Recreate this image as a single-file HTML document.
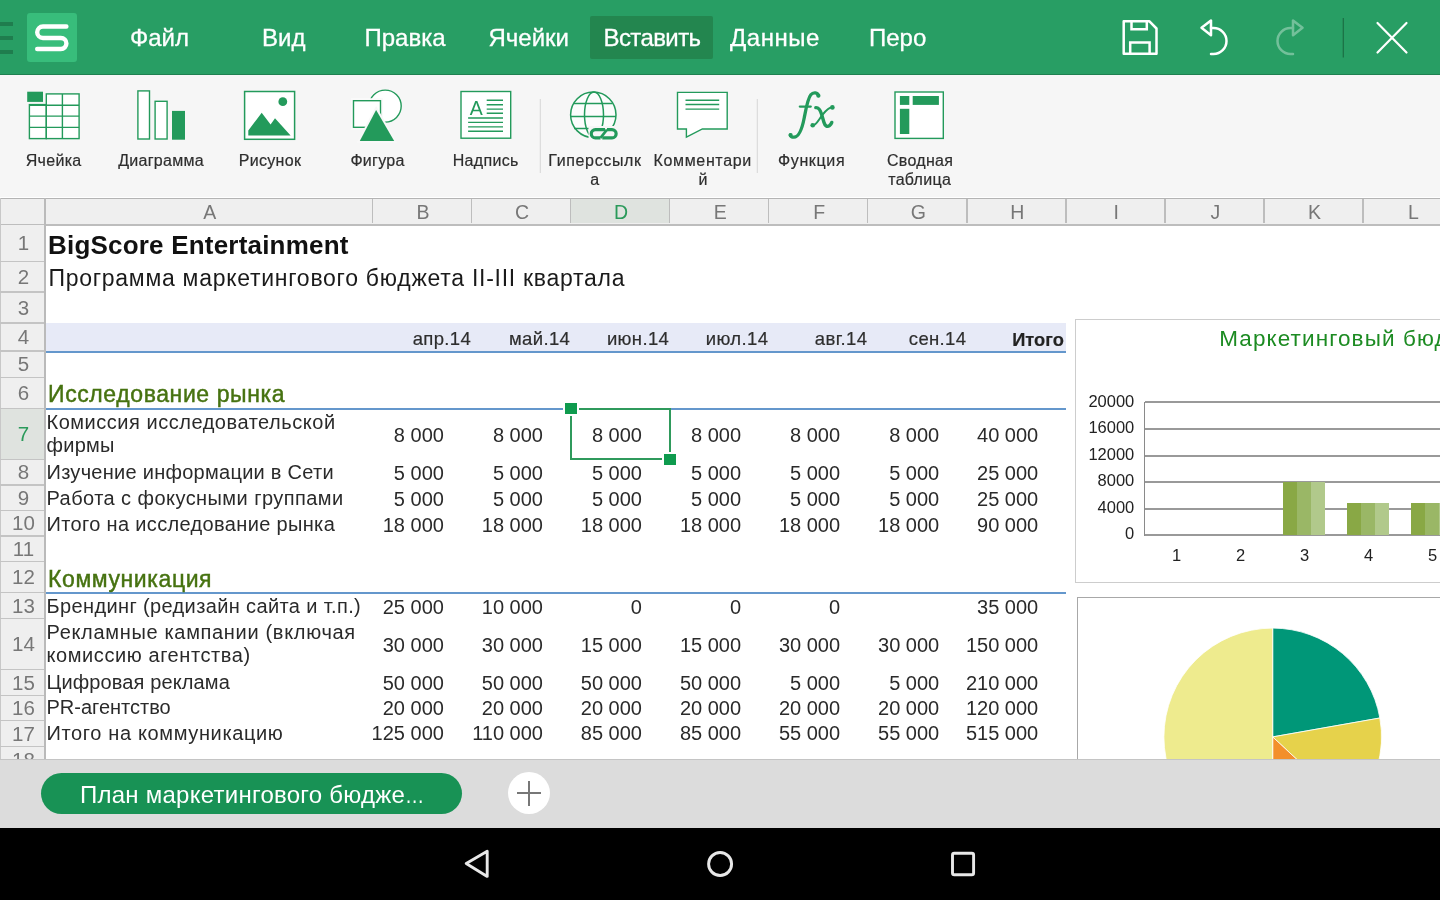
<!DOCTYPE html><html><head><meta charset="utf-8"><style>
*{margin:0;padding:0;box-sizing:border-box}
html,body{width:1440px;height:900px;overflow:hidden;background:#fff;font-family:"Liberation Sans", sans-serif}
.gs{position:absolute;left:0;top:0;width:1440px;height:900px;will-change:transform}
.a{position:absolute}
.t{position:absolute;white-space:nowrap;line-height:1}
.menu{color:#fff;font-size:24px;-webkit-text-stroke:0.3px #fff}
.tb{color:#2e2e2e;font-size:16px;letter-spacing:0.3px;text-align:center;-webkit-text-stroke:0.2px #2e2e2e}
.ch{color:#777;font-size:19.5px;text-align:center}
.rh{color:#777;font-size:20.5px;text-align:center}
.c{color:#2a2a2a;font-size:20px;letter-spacing:0.4px}
.n{color:#2a2a2a;font-size:20px;text-align:right}
.m{color:#2e2e2e;font-size:18.5px;text-align:right;letter-spacing:0.35px;-webkit-text-stroke:0.2px #2e2e2e}
</style></head><body><div class="gs">
<div class="a" style="left:0;top:0;width:1440px;height:75px;background:#289e64"></div>
<div class="a" style="left:0;top:74px;width:1440px;height:1px;background:#1f8050"></div>
<div class="a" style="left:0;top:21.5px;width:13px;height:4px;background:#1f7d4e"></div>
<div class="a" style="left:0;top:35.5px;width:13px;height:4px;background:#1f7d4e"></div>
<div class="a" style="left:0;top:49.5px;width:13px;height:4px;background:#1f7d4e"></div>
<div class="a" style="left:27px;top:13px;width:50px;height:49px;border-radius:3px;background:#38bd7b"></div>
<svg class="a" style="left:27px;top:13px" width="50" height="49" viewBox="0 0 50 49"><path d="M39.4 13.5 H15.95 A5.75 5.75 0 0 0 15.95 25 H33.9 A5.5 5.5 0 0 1 33.9 36 H10.2" fill="none" stroke="#fff" stroke-width="4.4" stroke-linecap="round"/></svg>
<div class="a" style="left:590px;top:16px;width:122.5px;height:42.8px;border-radius:2px;background:#23864f"></div>
<div class="t menu" style="left:130px;top:26.1px">Файл</div>
<div class="t menu" style="left:262px;top:26.1px">Вид</div>
<div class="t menu" style="left:364.5px;top:26.1px">Правка</div>
<div class="t menu" style="left:488.5px;top:26.1px">Ячейки</div>
<div class="t menu" style="left:603.5px;top:26.1px"><span style="letter-spacing:-0.6px">Вставить</span></div>
<div class="t menu" style="left:730px;top:26.1px"><span style="letter-spacing:0.55px">Данные</span></div>
<div class="t menu" style="left:869px;top:26.1px">Перо</div>
<svg class="a" style="left:1100px;top:0" width="340" height="74" viewBox="1100 0 340 74">
<path d="M1123.7 21.2 H1149.2 L1156.5 28.5 V53.8 H1123.7 Z" fill="none" stroke="#fff" stroke-width="2.5" stroke-linejoin="round"/>
<path d="M1131.5 21.2 V29.2 H1146.8 V21.2" fill="none" stroke="#fff" stroke-width="2.5"/>
<path d="M1130.2 53.8 V42.5 H1149.6 V53.8" fill="none" stroke="#fff" stroke-width="2.5"/>
<path d="M1201.5 27.8 L1211 20.5 V35.2 Z" fill="none" stroke="#fff" stroke-width="2.5" stroke-linejoin="round"/>
<path d="M1211 28 H1213.5 A13 13 0 0 1 1213.5 54 H1211" fill="none" stroke="#fff" stroke-width="2.5" stroke-linecap="round"/>
<g opacity="0.35">
<path d="M1302.5 27.8 L1293 20.5 V35.2 Z" fill="none" stroke="#fff" stroke-width="2.5" stroke-linejoin="round"/>
<path d="M1293 28 H1290.5 A13 13 0 0 0 1290.5 54 H1293" fill="none" stroke="#fff" stroke-width="2.5" stroke-linecap="round"/>
</g>
<rect x="1342.7" y="18" width="1.2" height="39.5" fill="#1b6e44"/>
<path d="M1377.5 23 L1406.5 52.5 M1406.5 23 L1377.5 52.5" stroke="#fff" stroke-width="2.2" stroke-linecap="round"/>
</svg>
<div class="a" style="left:0;top:75px;width:1440px;height:123px;background:#f6f6f6"></div>
<svg class="a" style="left:0;top:74px" width="1000" height="124" viewBox="0 74 1000 124">
<g fill="none" stroke="#239a5b" stroke-width="1.4">
<rect x="29.4" y="104.6" width="16.9" height="34" fill="#fff"/>
<rect x="46.3" y="93.9" width="32.8" height="44.7" fill="#fff"/>
<path d="M62.4 93.9 V138.6 M29.4 116.1 H79.1 M29.4 127.4 H79.1 M29.4 105.3 H79.1"/>
</g>
<rect x="27.2" y="91.7" width="15.8" height="10.2" fill="#239a5b"/>
<g fill="#fff" stroke="#239a5b" stroke-width="1.4">
<rect x="137.9" y="90.9" width="11.6" height="48.1"/>
<rect x="155.1" y="101.3" width="12" height="37.7"/>
</g>
<rect x="172" y="110.9" width="13" height="28.8" fill="#239a5b"/>
<rect x="244.6" y="91.5" width="50" height="47.8" fill="#fff" stroke="#239a5b" stroke-width="1.5"/>
<circle cx="282.8" cy="101.7" r="4.4" fill="#239a5b"/>
<path d="M248.3 135.6 V130.5 L261.7 112.8 L270.6 124.4 L275 118.3 L290.6 135.6 Z" fill="#239a5b"/>
<circle cx="385.2" cy="106.1" r="16" fill="#fff" stroke="#239a5b" stroke-width="1.4"/>
<rect x="353.5" y="100.7" width="27" height="26.6" fill="#fff" stroke="#fafafa" stroke-width="5"/>
<rect x="353.5" y="100.7" width="27" height="26.6" fill="#fff" stroke="#239a5b" stroke-width="1.4"/>
<path d="M376.1 106 L397.5 143 H356.5 Z" fill="#f8f8f8"/>
<path d="M376.1 110 L394.2 140.9 H359.8 Z" fill="#239a5b"/>
<rect x="461" y="91.5" width="49.7" height="46.7" fill="#fff" stroke="#239a5b" stroke-width="1.4"/>
<path d="M486.7 100.3 H503 M486.7 104.7 H503 M486.7 109.1 H503 M486.7 113.3 H503 M468.1 118 H503 M468.1 122.4 H503 M468.1 126.9 H503 M468.1 131.3 H503" stroke="#239a5b" stroke-width="1.4"/>
<text x="476.2" y="114.7" font-family="Liberation Sans" font-size="19.5" fill="#239a5b" text-anchor="middle">A</text>
<rect x="539.8" y="99" width="1" height="74" fill="#d6d6d6"/>
<circle cx="593.3" cy="114.8" r="22.7" fill="#fcfcfc" stroke="#239a5b" stroke-width="1.5"/>
<ellipse cx="594" cy="114.8" rx="9.5" ry="22.7" fill="none" stroke="#239a5b" stroke-width="1.5"/>
<path d="M574 103.6 H612.6 M570.6 116.4 H616 M574 128.5 H612.6" stroke="#239a5b" stroke-width="1.5"/>
<path d="M588.5 126 H619 V141 H588.5 Z" fill="#f6f6f6"/>
<g fill="none" stroke="#239a5b" stroke-width="3.2" stroke-linecap="butt">
<path d="M605 129.6 H595.4 A4.15 4.15 0 0 0 595.4 137.9 H600.5"/>
<path d="M602.3 137.9 H612 A4.15 4.15 0 0 0 612 129.6 H607"/>
<path d="M600.5 137.9 L607 129.6" stroke-width="2.6"/>
</g>
<path d="M677.5 92.4 H727.2 V129 H702.4 L686.4 137.2 V129 H677.5 Z" fill="#fff" stroke="#239a5b" stroke-width="1.4" stroke-linejoin="miter"/>
<path d="M685.5 100.2 H719.2 M685.5 104.5 H719.2 M685.5 109.1 H719.2" stroke="#239a5b" stroke-width="1.4"/>
<rect x="756.8" y="99" width="1" height="74" fill="#d6d6d6"/>
<g fill="none" stroke="#239a5b" stroke-linecap="round">
<path d="M818.3 95.6 C817.8 92.6 813.5 91.6 810.8 94.8 C807.8 98.3 806.3 107 804.3 117.5 C802.3 128 799.3 137 794 137.2 C791.8 137.3 790.3 136.2 790.3 135" stroke-width="3.3"/>
<path d="M799.8 106.6 H810.8" stroke-width="2.2"/>
<path d="M815.8 107.6 C818.6 107.4 820.2 109.5 821.5 114 L824 122.5 C825 126 827.2 127.3 829.5 125.6 C830.6 124.8 831.4 123.6 831.8 122.4" stroke-width="3.4"/>
<path d="M832.4 107.2 C829.2 107 826.6 109.6 822.6 114.6 C818.4 120 816.4 125.2 812.8 125.4" stroke-width="2"/>
</g>
<circle cx="818.4" cy="95.7" r="2.1" fill="#239a5b"/><circle cx="790.6" cy="135.1" r="2.1" fill="#239a5b"/>
<circle cx="832.4" cy="107.4" r="2.3" fill="#239a5b"/><circle cx="812.7" cy="125.3" r="2.3" fill="#239a5b"/>
<rect x="895" y="92" width="48.3" height="46.4" fill="#fff" stroke="#239a5b" stroke-width="1.4"/>
<rect x="899.9" y="96" width="9.4" height="8.9" fill="#239a5b"/>
<rect x="912.7" y="96" width="26.2" height="8.9" fill="#239a5b"/>
<rect x="899.9" y="108.8" width="9.4" height="25.2" fill="#239a5b"/>
</svg>
<div class="t tb" style="left:-16.4px;width:140px;top:153.2px">Ячейка</div>
<div class="t tb" style="left:91.1px;width:140px;top:153.2px">Диаграмма</div>
<div class="t tb" style="left:200px;width:140px;top:153.2px">Рисунок</div>
<div class="t tb" style="left:307.6px;width:140px;top:153.2px">Фигура</div>
<div class="t tb" style="left:415.7px;width:140px;top:153.2px">Надпись</div>
<div class="t tb" style="left:525px;width:140px;top:153.2px"><span style="letter-spacing:0.65px">Гиперссылк</span></div>
<div class="t tb" style="left:632.7px;width:140px;top:153.2px"><span style="letter-spacing:0.65px">Комментари</span></div>
<div class="t tb" style="left:741.6px;width:140px;top:153.2px"><span style="letter-spacing:0.65px">Функция</span></div>
<div class="t tb" style="left:850.1px;width:140px;top:153.2px">Сводная</div>
<div class="t tb" style="left:524.8px;width:140px;top:172.2px">а</div>
<div class="t tb" style="left:633px;width:140px;top:172.2px">й</div>
<div class="t tb" style="left:849.7px;width:140px;top:172.2px">таблица</div>
<div class="a" style="left:0;top:197px;width:1440px;height:1px;background:#fff"></div>
<div class="a" style="left:0;top:198px;width:1440px;height:28px;background:#efefef;border-top:1px solid #b4b4b4;border-bottom:2px solid #bdbdbd"></div>
<div class="a" style="left:570.6px;top:199px;width:99.0px;height:24px;background:#dfe3df"></div>
<div class="a" style="left:371.7px;top:199px;width:1.6px;height:24px;background:#bdbdbd"></div>
<div class="t ch" style="left:46px;width:327.5px;top:203.2px;color:#777">A</div>
<div class="a" style="left:470.7px;top:199px;width:1.6px;height:24px;background:#bdbdbd"></div>
<div class="t ch" style="left:373.5px;width:99.0px;top:203.2px;color:#777">B</div>
<div class="a" style="left:569.8000000000001px;top:199px;width:1.6px;height:24px;background:#bdbdbd"></div>
<div class="t ch" style="left:472.5px;width:99.10000000000002px;top:203.2px;color:#777">C</div>
<div class="a" style="left:668.8000000000001px;top:199px;width:1.6px;height:24px;background:#bdbdbd"></div>
<div class="t ch" style="left:571.6px;width:99.0px;top:203.2px;color:#2a9a5a">D</div>
<div class="a" style="left:767.9000000000001px;top:199px;width:1.6px;height:24px;background:#bdbdbd"></div>
<div class="t ch" style="left:670.6px;width:99.10000000000002px;top:203.2px;color:#777">E</div>
<div class="a" style="left:866.9000000000001px;top:199px;width:1.6px;height:24px;background:#bdbdbd"></div>
<div class="t ch" style="left:769.7px;width:99.0px;top:203.2px;color:#777">F</div>
<div class="a" style="left:966.0px;top:199px;width:1.6px;height:24px;background:#bdbdbd"></div>
<div class="t ch" style="left:868.7px;width:99.09999999999991px;top:203.2px;color:#777">G</div>
<div class="a" style="left:1065.0px;top:199px;width:1.6px;height:24px;background:#bdbdbd"></div>
<div class="t ch" style="left:967.8px;width:99.0px;top:203.2px;color:#777">H</div>
<div class="a" style="left:1164.0px;top:199px;width:1.6px;height:24px;background:#bdbdbd"></div>
<div class="t ch" style="left:1066.8px;width:99.0px;top:203.2px;color:#777">I</div>
<div class="a" style="left:1263.1000000000001px;top:199px;width:1.6px;height:24px;background:#bdbdbd"></div>
<div class="t ch" style="left:1165.8px;width:99.10000000000014px;top:203.2px;color:#777">J</div>
<div class="a" style="left:1362.1000000000001px;top:199px;width:1.6px;height:24px;background:#bdbdbd"></div>
<div class="t ch" style="left:1264.9px;width:99.0px;top:203.2px;color:#777">K</div>
<div class="a" style="left:1461.2px;top:199px;width:1.6px;height:24px;background:#bdbdbd"></div>
<div class="t ch" style="left:1363.9px;width:99.09999999999991px;top:203.2px;color:#777">L</div>
<div class="a" style="left:0;top:225px;width:45px;height:534px;background:#efefef"></div>
<div class="a" style="left:0;top:408.3px;width:44px;height:50.89999999999998px;background:#dfe3df"></div>
<div class="a" style="left:0;top:198px;width:1px;height:561px;background:#c8c8c8"></div>
<div class="a" style="left:44px;top:198px;width:2px;height:561px;background:#bababa"></div>
<div class="a" style="left:0;top:260.6px;width:44px;height:1.4px;background:#c4c4c4"></div>
<div class="t rh" style="left:0.5px;width:46px;top:233.2px;color:#777">1</div>
<div class="a" style="left:0;top:291.3px;width:44px;height:1.4px;background:#c4c4c4"></div>
<div class="t rh" style="left:0.5px;width:46px;top:266.8px;color:#777">2</div>
<div class="a" style="left:0;top:322.3px;width:44px;height:1.4px;background:#c4c4c4"></div>
<div class="t rh" style="left:0.5px;width:46px;top:297.6px;color:#777">3</div>
<div class="a" style="left:0;top:350.3px;width:44px;height:1.4px;background:#c4c4c4"></div>
<div class="t rh" style="left:0.5px;width:46px;top:327.1px;color:#777">4</div>
<div class="a" style="left:0;top:376.8px;width:44px;height:1.4px;background:#c4c4c4"></div>
<div class="t rh" style="left:0.5px;width:46px;top:354.4px;color:#777">5</div>
<div class="a" style="left:0;top:407.6px;width:44px;height:1.4px;background:#c4c4c4"></div>
<div class="t rh" style="left:0.5px;width:46px;top:383.0px;color:#777">6</div>
<div class="a" style="left:0;top:458.5px;width:44px;height:1.4px;background:#c4c4c4"></div>
<div class="t rh" style="left:0.5px;width:46px;top:423.9px;color:#2a9a5a">7</div>
<div class="a" style="left:0;top:484.3px;width:44px;height:1.4px;background:#c4c4c4"></div>
<div class="t rh" style="left:0.5px;width:46px;top:462.2px;color:#777">8</div>
<div class="a" style="left:0;top:509.8px;width:44px;height:1.4px;background:#c4c4c4"></div>
<div class="t rh" style="left:0.5px;width:46px;top:487.9px;color:#777">9</div>
<div class="a" style="left:0;top:535.3px;width:44px;height:1.4px;background:#c4c4c4"></div>
<div class="t rh" style="left:0.5px;width:46px;top:513.4px;color:#777">10</div>
<div class="a" style="left:0;top:560.8px;width:44px;height:1.4px;background:#c4c4c4"></div>
<div class="t rh" style="left:0.5px;width:46px;top:538.9px;color:#777">11</div>
<div class="a" style="left:0;top:591.8px;width:44px;height:1.4px;background:#c4c4c4"></div>
<div class="t rh" style="left:0.5px;width:46px;top:567.1px;color:#777">12</div>
<div class="a" style="left:0;top:617.5px;width:44px;height:1.4px;background:#c4c4c4"></div>
<div class="t rh" style="left:0.5px;width:46px;top:595.5px;color:#777">13</div>
<div class="a" style="left:0;top:669.0px;width:44px;height:1.4px;background:#c4c4c4"></div>
<div class="t rh" style="left:0.5px;width:46px;top:634.1px;color:#777">14</div>
<div class="a" style="left:0;top:694.5999999999999px;width:44px;height:1.4px;background:#c4c4c4"></div>
<div class="t rh" style="left:0.5px;width:46px;top:672.6px;color:#777">15</div>
<div class="a" style="left:0;top:720.0999999999999px;width:44px;height:1.4px;background:#c4c4c4"></div>
<div class="t rh" style="left:0.5px;width:46px;top:698.1px;color:#777">16</div>
<div class="a" style="left:0;top:746.0px;width:44px;height:1.4px;background:#c4c4c4"></div>
<div class="t rh" style="left:0.5px;width:46px;top:723.9px;color:#777">17</div>
<div class="a" style="left:0;top:771.9px;width:44px;height:1.4px;background:#c4c4c4"></div>
<div class="t rh" style="left:0.5px;width:46px;top:749.8px;color:#777">18</div>
<div class="a" style="left:46px;top:323.4px;width:1020px;height:27.5px;background:#e7eaf7"></div>
<div class="a" style="left:46px;top:350.6px;width:1020px;height:2px;background:#6497cc"></div>
<div class="a" style="left:46px;top:407.6px;width:1020px;height:2px;background:#6497cc"></div>
<div class="a" style="left:46px;top:592.2px;width:1020px;height:2px;background:#6497cc"></div>
<div class="t c" style="left:48px;top:232.3px;font-size:26px;font-weight:bold;color:#111;letter-spacing:0.2px">BigScore Entertainment</div>
<div class="t c" style="left:48.4px;top:266.8px;font-size:23px;color:#1a1a1a;letter-spacing:0.73px">Программа маркетингового бюджета II-III квартала</div>
<div class="t c" style="left:48px;top:382.8px;font-size:23px;color:#467210;letter-spacing:0.6px;-webkit-text-stroke:0.45px #467210">Исследование рынка</div>
<div class="t c" style="left:48px;top:567.5px;font-size:23px;color:#467210;letter-spacing:0.6px;-webkit-text-stroke:0.45px #467210">Коммуникация</div>
<div class="t c" style="left:46.5px;top:412.1px;letter-spacing:0.528px">Комиссия исследовательской</div>
<div class="t c" style="left:46.5px;top:435.1px;letter-spacing:0.25px">фирмы</div>
<div class="t c" style="left:46.5px;top:462.3px;letter-spacing:0.272px">Изучение информации в Сети</div>
<div class="t c" style="left:46.5px;top:488.1px;letter-spacing:0.438px">Работа с фокусными группами</div>
<div class="t c" style="left:46.5px;top:513.6px;letter-spacing:0.346px">Итого на исследование рынка</div>
<div class="t c" style="left:46.5px;top:595.8px;letter-spacing:0.371px">Брендинг (редизайн сайта и т.п.)</div>
<div class="t c" style="left:46.5px;top:621.8px;letter-spacing:0.677px">Рекламные кампании (включая</div>
<div class="t c" style="left:46.5px;top:645.3px;letter-spacing:0.578px">комиссию агентства)</div>
<div class="t c" style="left:46.5px;top:672.1px;letter-spacing:0.12px">Цифровая реклама</div>
<div class="t c" style="left:46.5px;top:697.1px;letter-spacing:0px">PR-агентство</div>
<div class="t c" style="left:46.5px;top:722.7px;letter-spacing:0.635px">Итого на коммуникацию</div>
<div class="t m" style="left:351.5px;width:119.6px;top:330.3px">апр.14</div>
<div class="t m" style="left:450.6px;width:119.6px;top:330.3px">май.14</div>
<div class="t m" style="left:549.6px;width:119.6px;top:330.3px">июн.14</div>
<div class="t m" style="left:648.7px;width:119.6px;top:330.3px">июл.14</div>
<div class="t m" style="left:747.7px;width:119.6px;top:330.3px">авг.14</div>
<div class="t m" style="left:846.8px;width:119.6px;top:330.3px">сен.14</div>
<div class="t m" style="left:945.8px;width:118px;top:330.9px;font-weight:bold;color:#222;font-size:18.3px;letter-spacing:0">Итого</div>
<div class="t n" style="left:321.5px;width:122.4px;top:425.1px">8 000</div>
<div class="t n" style="left:420.6px;width:122.4px;top:425.1px">8 000</div>
<div class="t n" style="left:519.6px;width:122.4px;top:425.1px">8 000</div>
<div class="t n" style="left:618.7px;width:122.4px;top:425.1px">8 000</div>
<div class="t n" style="left:717.7px;width:122.4px;top:425.1px">8 000</div>
<div class="t n" style="left:816.8px;width:122.4px;top:425.1px">8 000</div>
<div class="t n" style="left:915.8px;width:122.4px;top:425.1px">40 000</div>
<div class="t n" style="left:321.5px;width:122.4px;top:463.3px">5 000</div>
<div class="t n" style="left:420.6px;width:122.4px;top:463.3px">5 000</div>
<div class="t n" style="left:519.6px;width:122.4px;top:463.3px">5 000</div>
<div class="t n" style="left:618.7px;width:122.4px;top:463.3px">5 000</div>
<div class="t n" style="left:717.7px;width:122.4px;top:463.3px">5 000</div>
<div class="t n" style="left:816.8px;width:122.4px;top:463.3px">5 000</div>
<div class="t n" style="left:915.8px;width:122.4px;top:463.3px">25 000</div>
<div class="t n" style="left:321.5px;width:122.4px;top:488.8px">5 000</div>
<div class="t n" style="left:420.6px;width:122.4px;top:488.8px">5 000</div>
<div class="t n" style="left:519.6px;width:122.4px;top:488.8px">5 000</div>
<div class="t n" style="left:618.7px;width:122.4px;top:488.8px">5 000</div>
<div class="t n" style="left:717.7px;width:122.4px;top:488.8px">5 000</div>
<div class="t n" style="left:816.8px;width:122.4px;top:488.8px">5 000</div>
<div class="t n" style="left:915.8px;width:122.4px;top:488.8px">25 000</div>
<div class="t n" style="left:321.5px;width:122.4px;top:514.6px">18 000</div>
<div class="t n" style="left:420.6px;width:122.4px;top:514.6px">18 000</div>
<div class="t n" style="left:519.6px;width:122.4px;top:514.6px">18 000</div>
<div class="t n" style="left:618.7px;width:122.4px;top:514.6px">18 000</div>
<div class="t n" style="left:717.7px;width:122.4px;top:514.6px">18 000</div>
<div class="t n" style="left:816.8px;width:122.4px;top:514.6px">18 000</div>
<div class="t n" style="left:915.8px;width:122.4px;top:514.6px">90 000</div>
<div class="t n" style="left:321.5px;width:122.4px;top:596.7px">25 000</div>
<div class="t n" style="left:420.6px;width:122.4px;top:596.7px">10 000</div>
<div class="t n" style="left:519.6px;width:122.4px;top:596.7px">0</div>
<div class="t n" style="left:618.7px;width:122.4px;top:596.7px">0</div>
<div class="t n" style="left:717.7px;width:122.4px;top:596.7px">0</div>
<div class="t n" style="left:915.8px;width:122.4px;top:596.7px">35 000</div>
<div class="t n" style="left:321.5px;width:122.4px;top:635.1px">30 000</div>
<div class="t n" style="left:420.6px;width:122.4px;top:635.1px">30 000</div>
<div class="t n" style="left:519.6px;width:122.4px;top:635.1px">15 000</div>
<div class="t n" style="left:618.7px;width:122.4px;top:635.1px">15 000</div>
<div class="t n" style="left:717.7px;width:122.4px;top:635.1px">30 000</div>
<div class="t n" style="left:816.8px;width:122.4px;top:635.1px">30 000</div>
<div class="t n" style="left:915.8px;width:122.4px;top:635.1px">150 000</div>
<div class="t n" style="left:321.5px;width:122.4px;top:673.3px">50 000</div>
<div class="t n" style="left:420.6px;width:122.4px;top:673.3px">50 000</div>
<div class="t n" style="left:519.6px;width:122.4px;top:673.3px">50 000</div>
<div class="t n" style="left:618.7px;width:122.4px;top:673.3px">50 000</div>
<div class="t n" style="left:717.7px;width:122.4px;top:673.3px">5 000</div>
<div class="t n" style="left:816.8px;width:122.4px;top:673.3px">5 000</div>
<div class="t n" style="left:915.8px;width:122.4px;top:673.3px">210 000</div>
<div class="t n" style="left:321.5px;width:122.4px;top:698.3px">20 000</div>
<div class="t n" style="left:420.6px;width:122.4px;top:698.3px">20 000</div>
<div class="t n" style="left:519.6px;width:122.4px;top:698.3px">20 000</div>
<div class="t n" style="left:618.7px;width:122.4px;top:698.3px">20 000</div>
<div class="t n" style="left:717.7px;width:122.4px;top:698.3px">20 000</div>
<div class="t n" style="left:816.8px;width:122.4px;top:698.3px">20 000</div>
<div class="t n" style="left:915.8px;width:122.4px;top:698.3px">120 000</div>
<div class="t n" style="left:321.5px;width:122.4px;top:723.3px">125 000</div>
<div class="t n" style="left:420.6px;width:122.4px;top:723.3px">110 000</div>
<div class="t n" style="left:519.6px;width:122.4px;top:723.3px">85 000</div>
<div class="t n" style="left:618.7px;width:122.4px;top:723.3px">85 000</div>
<div class="t n" style="left:717.7px;width:122.4px;top:723.3px">55 000</div>
<div class="t n" style="left:816.8px;width:122.4px;top:723.3px">55 000</div>
<div class="t n" style="left:915.8px;width:122.4px;top:723.3px">515 000</div>
<div class="a" style="left:569.6px;top:407.6px;width:101px;height:52.8px;border:2px solid #2f9a5c"></div>
<div class="a" style="left:562.8px;top:401.3px;width:16px;height:15px;background:#fff"></div>
<div class="a" style="left:564.9px;top:403.2px;width:11.8px;height:11.2px;background:#0f9b4e"></div>
<div class="a" style="left:661.9px;top:452.0px;width:16px;height:15px;background:#fff"></div>
<div class="a" style="left:664.0px;top:453.9px;width:11.8px;height:11.2px;background:#0f9b4e"></div>
<div class="a" style="left:1075.3px;top:318.7px;width:400px;height:264.3px;background:#fff;border:1px solid #cdcdcd"></div>
<div class="t" style="left:1219.2px;top:328.4px;font-size:22.5px;color:#1c8b22;letter-spacing:1.1px">Маркетинговый бюджет</div>
<div class="a" style="left:1144.5px;top:401px;width:300px;height:2px;background:#999"></div>
<div class="t" style="left:1034.3px;width:100px;text-align:right;top:392.5px;font-size:16.5px;color:#222">20000</div>
<div class="a" style="left:1144.5px;top:428px;width:300px;height:2px;background:#999"></div>
<div class="t" style="left:1034.3px;width:100px;text-align:right;top:419.1px;font-size:16.5px;color:#222">16000</div>
<div class="a" style="left:1144.5px;top:455px;width:300px;height:2px;background:#999"></div>
<div class="t" style="left:1034.3px;width:100px;text-align:right;top:445.8px;font-size:16.5px;color:#222">12000</div>
<div class="a" style="left:1144.5px;top:481px;width:300px;height:2px;background:#999"></div>
<div class="t" style="left:1034.3px;width:100px;text-align:right;top:472.4px;font-size:16.5px;color:#222">8000</div>
<div class="a" style="left:1144.5px;top:508px;width:300px;height:2px;background:#999"></div>
<div class="t" style="left:1034.3px;width:100px;text-align:right;top:499.1px;font-size:16.5px;color:#222">4000</div>
<div class="a" style="left:1144.5px;top:534px;width:300px;height:2px;background:#999"></div>
<div class="t" style="left:1034.3px;width:100px;text-align:right;top:525.4px;font-size:16.5px;color:#222">0</div>
<div class="a" style="left:1143.8px;top:402px;width:1.5px;height:133.5px;background:#8a8a8a"></div>
<div class="t" style="left:1156.5px;width:40px;text-align:center;top:546.6px;font-size:16.5px;color:#222">1</div>
<div class="t" style="left:1220.5px;width:40px;text-align:center;top:546.6px;font-size:16.5px;color:#222">2</div>
<div class="t" style="left:1284.5px;width:40px;text-align:center;top:546.6px;font-size:16.5px;color:#222">3</div>
<div class="t" style="left:1348.5px;width:40px;text-align:center;top:546.6px;font-size:16.5px;color:#222">4</div>
<div class="t" style="left:1412.5px;width:40px;text-align:center;top:546.6px;font-size:16.5px;color:#222">5</div>
<div class="a" style="left:1282.8px;top:482px;width:14.2px;height:53.200000000000045px;background:#89a845"></div>
<div class="a" style="left:1296.9px;top:482px;width:14.2px;height:53.200000000000045px;background:#9ab766"></div>
<div class="a" style="left:1311.0px;top:482px;width:14.2px;height:53.200000000000045px;background:#b1c98b"></div>
<div class="a" style="left:1346.8px;top:502.5px;width:14.2px;height:32.700000000000045px;background:#89a845"></div>
<div class="a" style="left:1360.9px;top:502.5px;width:14.2px;height:32.700000000000045px;background:#9ab766"></div>
<div class="a" style="left:1375.0px;top:502.5px;width:14.2px;height:32.700000000000045px;background:#b1c98b"></div>
<div class="a" style="left:1410.8px;top:502.5px;width:14.2px;height:32.700000000000045px;background:#89a845"></div>
<div class="a" style="left:1424.9px;top:502.5px;width:14.2px;height:32.700000000000045px;background:#9ab766"></div>
<div class="a" style="left:1439.0px;top:502.5px;width:14.2px;height:32.700000000000045px;background:#b1c98b"></div>
<div class="a" style="left:1076.5px;top:596.8px;width:400px;height:200px;background:#fff;border:1.5px solid #a8a8a8"></div>
<svg class="a" style="left:1077px;top:598px" width="363" height="161" viewBox="1077 598 363 161"><path d="M1272.7 736.9 L1272.70 628.10 A108.8 108.8 0 0 1 1379.85 718.01 Z" fill="#009778" stroke="#fff" stroke-width="0.8"/><path d="M1272.7 736.9 L1379.85 718.01 A108.8 108.8 0 0 1 1352.27 811.10 Z" fill="#e6d24b" stroke="#fff" stroke-width="0.8"/><path d="M1272.7 736.9 L1352.27 811.10 A108.8 108.8 0 0 1 1272.70 845.70 Z" fill="#f38f2b" stroke="#fff" stroke-width="0.8"/><path d="M1272.7 736.9 L1272.70 845.70 A108.8 108.8 0 0 1 1272.70 628.10 Z" fill="#eeeb8e" stroke="#fff" stroke-width="0.8"/></svg>
<div class="a" style="left:0;top:758.5px;width:1440px;height:1.5px;background:#c4c4c4"></div>
<div class="a" style="left:0;top:760px;width:1440px;height:67.5px;background:#dcdcdc"></div>
<div class="a" style="left:40.6px;top:772.6px;width:421.4px;height:41.5px;border-radius:21px;background:#189255"></div>
<div class="t" style="left:80px;top:782.5px;font-size:24px;color:#fff;letter-spacing:0.25px">План маркетингового бюдже<span style="display:inline-block;transform:scaleX(0.8);transform-origin:0 0">…</span></div>
<div class="a" style="left:507.9px;top:771.7px;width:42.6px;height:42.6px;border-radius:50%;background:#fff"></div>
<div class="a" style="left:516.8px;top:792.1px;width:24.6px;height:2px;background:#777"></div>
<div class="a" style="left:528.2px;top:780.8px;width:2px;height:24.8px;background:#777"></div>
<div class="a" style="left:0;top:827.5px;width:1440px;height:72.5px;background:#000"></div>
<svg class="a" style="left:0;top:828px" width="1440" height="72" viewBox="0 828 1440 72">
<path d="M466.2 863.6 L487.2 851.3 V876.4 Z" fill="none" stroke="#e8e8e8" stroke-width="2.9" stroke-linejoin="round"/>
<circle cx="720.1" cy="864" r="11.5" fill="none" stroke="#e8e8e8" stroke-width="2.9"/>
<rect x="952.5" y="853.2" width="21.1" height="21.6" rx="1.8" fill="none" stroke="#e8e8e8" stroke-width="2.9"/>
</svg>
</div></body></html>
